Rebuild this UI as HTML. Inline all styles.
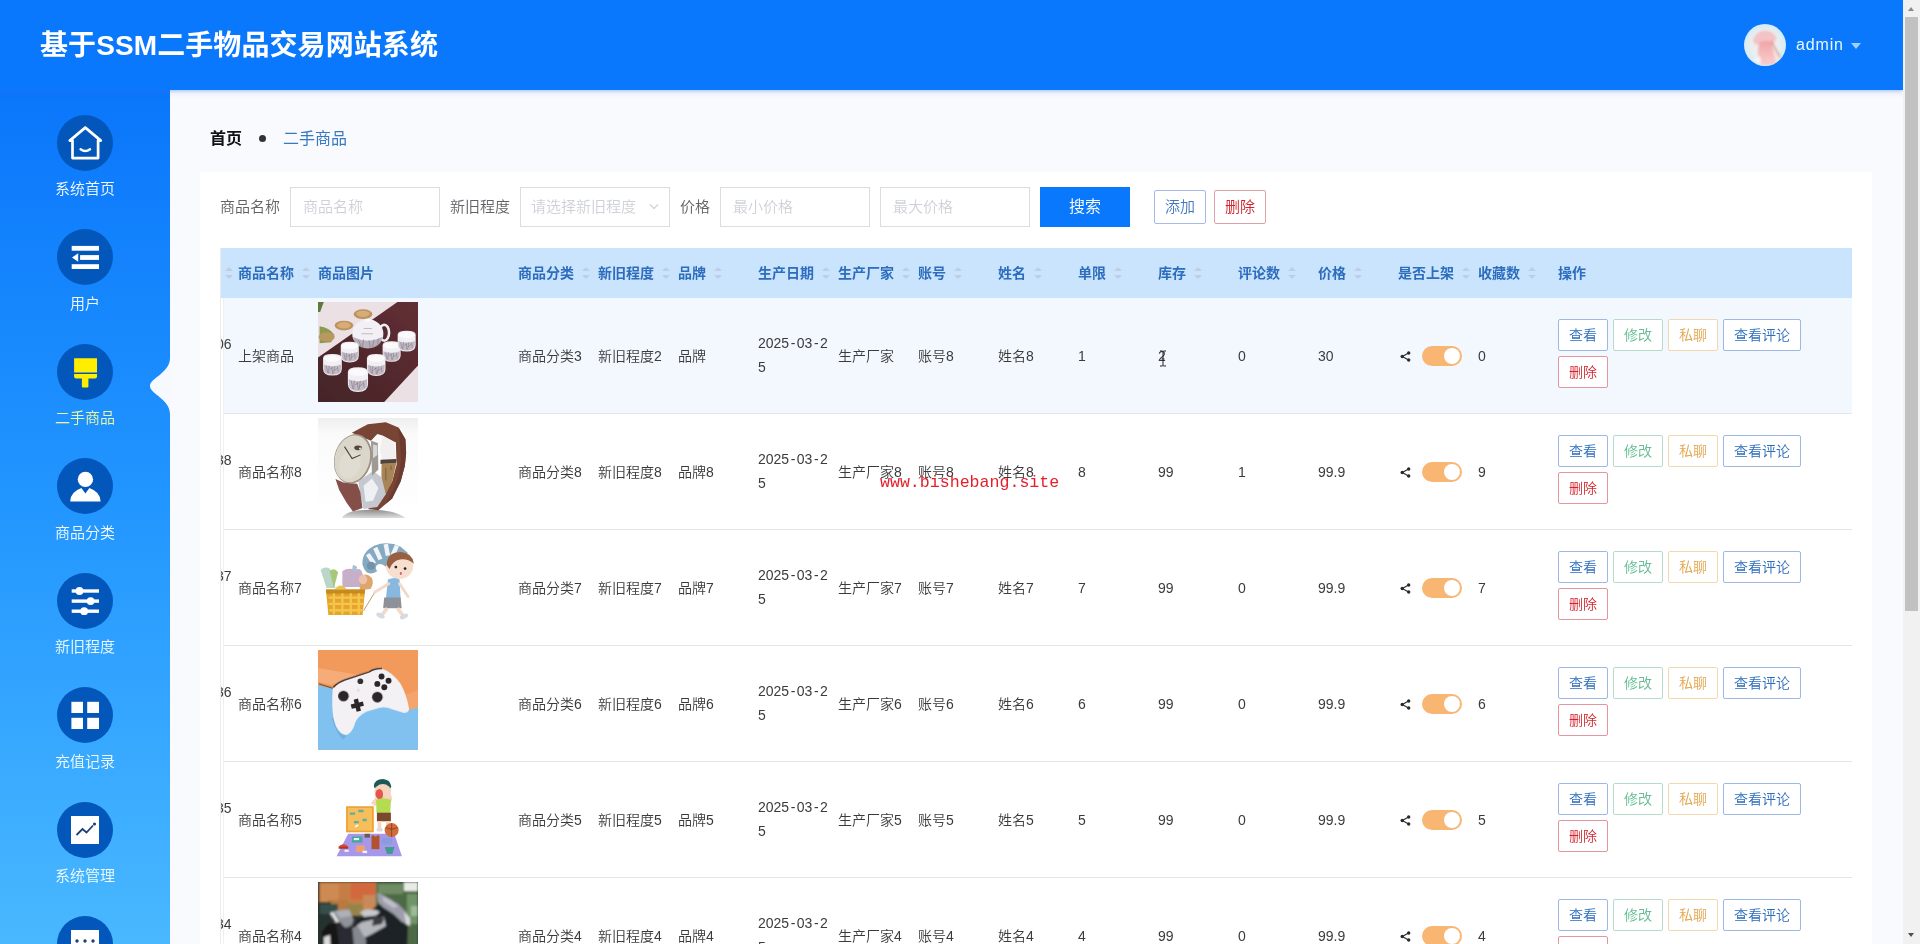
<!DOCTYPE html>
<html lang="zh-CN">
<head>
<meta charset="utf-8">
<title>基于SSM二手物品交易网站系统</title>
<style>
*{box-sizing:border-box;margin:0;padding:0}
html,body{width:1920px;height:944px;overflow:hidden}
body{font-family:"Liberation Sans","Noto Sans CJK SC",sans-serif;font-size:14px;font-weight:350;color:#333;background:#f8fafe;position:relative}
.header,.sidebar,.main,.wm,.sbar{will-change:transform}
/* ---------- header ---------- */
.header{position:absolute;left:0;top:0;width:1903px;height:90px;background:#0a78fd;z-index:5;box-shadow:0 1px 3px rgba(30,120,245,.32),0 3px 6px rgba(110,110,230,.13)}
.header .title{position:absolute;left:40px;top:0;height:90px;line-height:92px;font-size:28px;font-weight:700;color:#fff;white-space:nowrap;letter-spacing:.09px}
.header .user{position:absolute;left:1743px;top:24px;height:42px;display:flex;align-items:center;color:#fff;font-size:16px}
.header .avatar{width:42px;height:42px;border-radius:50%;overflow:hidden;display:block;margin-left:1px}
.header .uname{margin-left:10px;line-height:42px;letter-spacing:.85px;color:#e8f8ff}
.header .caret{margin-left:7px;margin-top:2px;width:0;height:0;border-left:5px solid transparent;border-right:5px solid transparent;border-top:6px solid #9fd0ff}
/* ---------- sidebar ---------- */
.sidebar{position:absolute;left:0;top:90px;width:170px;height:854px;background:linear-gradient(180deg,#0a76fb 0%,#2296ff 48.6%,#49b8ff 100%);z-index:3;overflow:hidden}
.menu{list-style:none}
.menu li{height:114.5px;text-align:center;color:#f2fbff;font-size:15px;position:relative}
.menu li .ic{position:absolute;left:57px;top:24.5px;width:56px;height:56px;border-radius:50%;background:#0457ba;display:block}
.menu li .ic svg{position:absolute;left:0;top:0;width:56px;height:56px}
.menu li .tx{position:absolute;left:0;width:170px;top:88px;line-height:22px;font-weight:350}
.menu li.on .tx{color:#eaf7a8}
.notch{position:absolute;left:148px;top:266px;width:22px;height:60px}
/* ---------- main ---------- */
.main{position:absolute;left:170px;top:90px;width:1733px;height:854px;background:#f8fafe;overflow:hidden}
.crumb{position:absolute;left:40px;top:37.500px;height:22px;line-height:22px;font-size:16px;white-space:nowrap}
.crumb b{font-weight:700;color:#111}
.crumb i{display:inline-block;width:7px;height:7px;border-radius:50%;background:#333;margin:0 17.5px 1px 16.5px;vertical-align:middle}
.crumb span{color:#3a78c2;font-weight:400}
.card{position:absolute;left:30px;top:82px;width:1672px;height:800px;background:#fff}
.filter{position:absolute;left:20px;top:15px;height:40px;width:1600px;font-size:15px;color:#606266}
.filter label{position:absolute;top:0;line-height:40px;white-space:nowrap}
.filter .inp{position:absolute;top:0;width:150px;height:40px;border:1px solid #dcdde0;background:#fff;color:#ced1d7;line-height:38px;padding-left:12px;font-size:15px;white-space:nowrap;overflow:hidden}
.filter .btn-s{position:absolute;left:820px;top:0;width:90px;height:40px;background:#0a78fd;color:#fff;font-size:16px;text-align:center;line-height:39px}
.filter .btn-p{position:absolute;top:3px;height:34px;width:52px;border:1px solid #a6bce4;border-radius:2px;background:#fff;text-align:center;line-height:32px;font-size:15px;color:#4478bf}
.filter .btn-p.del{border-color:#e0a0a6;color:#cf222c}
/* ---------- table ---------- */
.tbl{position:absolute;left:20px;top:76px;width:1632px;height:724px;overflow:hidden;border-left:1px solid #ebebee}
.thead{position:absolute;left:0;top:0;width:1631px;height:50px;background:#cae4fe}
.thead span{position:absolute;top:0;line-height:51px;font-weight:700;color:#2d6dbd;white-space:nowrap}
.thead em{position:absolute;top:19px;width:9px;height:13px}
.thead em:before,.thead em:after{content:"";position:absolute;left:0;border-left:4.500px solid transparent;border-right:4.500px solid transparent}
.thead em:before{top:0;border-bottom:4.5px solid #bdcde6}
.thead em:after{top:7.5px;border-top:4.5px solid #bdcde6}
.row{position:absolute;left:0;width:1631px;height:116px;background:#fff}
.row:before{content:"";position:absolute;left:2px;top:0;width:1px;height:116px;background:#f0f0f3}
.row:after{content:"";position:absolute;left:3px;right:0;bottom:0;height:1px;background:#e2e5ec}
.row.hv{background:linear-gradient(90deg,#fff 3px,#f3f7fe 3px)}
.row .c{position:absolute;white-space:nowrap;line-height:23px;color:#3b3b3b}
.row .idx{left:-5px}
.row .pic{position:absolute;left:97px;top:4px;width:100px;height:100px;display:block}
.row .date{white-space:normal;width:72px;line-height:24px;word-break:break-all}
.row .date i{font-style:normal;margin:0 1.5px}
.sw{position:absolute;left:1201px;top:48px;width:40px;height:20px;border-radius:10px;background:#f9b572}
.sw:after{content:"";position:absolute;right:2px;top:2px;width:16px;height:16px;border-radius:50%;background:#fff}
.share{position:absolute;left:1179px;top:53px;width:11px;height:11px}
.ops{position:absolute;left:1337px;top:21px;width:290px;font-size:0}
.ops a{display:inline-block;height:32px;line-height:30px;padding:0 10px;border:1px solid #9db8e4;border-radius:2px;background:#fff;color:#2d6dbd;font-size:14px;margin:0 5px 5px 0;text-decoration:none;vertical-align:top}
.ops a.g{color:#64bd93;border-color:#b5dccb}
.ops a.o{color:#e2a44c;border-color:#f3d8ae}
.ops a.r{color:#d3222c;border-color:#e5959b}
/* ---------- misc ---------- */
.wm{position:absolute;left:880px;top:471.700px;font-family:"Liberation Mono",monospace;font-size:16.6px;line-height:22px;color:#e5202b;z-index:9;white-space:nowrap}
.ibeam{position:absolute;left:1159px;top:350px;width:8px;height:17px;z-index:9}
.sbar{position:absolute;left:1903px;top:0;width:17px;height:944px;background:#f1f1f1;z-index:10}
.sbar .th{position:absolute;left:2px;top:17px;width:13px;height:594px;background:#c1c1c1}
.sbar .up,.sbar .dn{position:absolute;left:5px;width:0;height:0;border-left:3.5px solid transparent;border-right:3.5px solid transparent}
.sbar .up{top:7px;border-bottom:4px solid #8a8a8a}
.sbar .dn{top:933px;border-top:4px solid #505050}
</style>
</head>
<body>
<div class="header">
  <div class="title">基于SSM二手物品交易网站系统</div>
  <div class="user">
    <span class="avatar"><svg viewBox="0 0 42 42" width="42" height="42"><defs><radialGradient id="ga"><stop offset=".6" stop-color="#ecefed"/><stop offset="1" stop-color="#d5ecf8"/></radialGradient><filter id="ba"><feGaussianBlur stdDeviation=".9"/></filter><linearGradient id="gb" x1="0" y1="0" x2="0" y2="1"><stop offset="0" stop-color="#f2a3a8"/><stop offset="1" stop-color="#f7cfcd"/></linearGradient></defs><rect width="42" height="42" fill="url(#ga)"/><g filter="url(#ba)"><path d="M9 17q2-10 12-10.500 9 .5 11.500 8l-3 5-18 1z" fill="#f3c3c6"/><path d="M15 19q6-4 12-1l5 10 .5 13h-17l-1.500-12z" fill="url(#gb)"/><path d="M27.500 17.500l8.500 16" stroke="#c9856f" stroke-width="1.200"/><path d="M28 20l7 14-3 6-3-14z" fill="#f4e3df"/><path d="M8 36l8-4 1 8z" fill="#f5f5f7"/></g></svg></span>
    <span class="uname">admin</span><span class="caret"></span>
  </div>
</div>

<div class="sidebar">
  <ul class="menu">
    <li><span class="ic"><svg viewBox="0 0 56 56"><path d="M28.300 12.600L12.800 25.600h2.700v17.500h25.600V25.600h2.700z" fill="none" stroke="#fff" stroke-width="2.700" stroke-linejoin="round"/><path d="M23.600 34.200q4.700 3.600 9.400 0" fill="none" stroke="#fff" stroke-width="2.400" stroke-linecap="round"/></svg></span><span class="tx">系统首页</span></li>
    <li><span class="ic"><svg viewBox="0 0 56 56"><rect x="14.700" y="16.900" width="27.300" height="4.800" fill="#fff"/><rect x="23.100" y="26.100" width="18.900" height="4.800" fill="#fff"/><rect x="14.700" y="35.200" width="27.300" height="4.800" fill="#fff"/><path d="M15 28.500l6.200-4.200v8.400z" fill="#fff"/></svg></span><span class="tx">用户</span></li>
    <li class="on"><span class="ic"><svg viewBox="0 0 56 56"><path d="M17.100 14.200h22.900v14.200H17.100zM17.100 30h22.900v2.500q0 2-2 2h-6.600v8.100q0 1-1 1h-4.500q-1 0-1-1V34.500H19.100q-2 0-2-2z" fill="#ffee00"/></svg></span><span class="tx">二手商品</span></li>
    <li><span class="ic"><svg viewBox="0 0 56 56"><circle cx="28.400" cy="21.400" r="7.700" fill="#fff"/><path d="M13.200 43.500q0-9.500 11.200-13.500l4 5.500 4-5.500q11.200 4 11.200 13.500z" fill="#fff"/></svg></span><span class="tx">商品分类</span></li>
    <li><span class="ic"><svg viewBox="0 0 56 56"><g fill="#fff"><rect x="14.700" y="16.300" width="27.300" height="3.400"/><rect x="14.700" y="26.400" width="27.300" height="3.400"/><rect x="14.700" y="36.500" width="27.300" height="3.400"/><circle cx="22.500" cy="18" r="3.900"/><circle cx="33.600" cy="28.100" r="3.900"/><circle cx="27.200" cy="38.200" r="3.900"/></g></svg></span><span class="tx">新旧程度</span></li>
    <li><span class="ic"><svg viewBox="0 0 56 56"><g fill="#fff"><rect x="14.400" y="14.800" width="11.600" height="11.200"/><rect x="30.200" y="14.800" width="11.800" height="11.200"/><rect x="14.400" y="30.800" width="11.600" height="11.200"/><rect x="30.200" y="30.800" width="11.800" height="11.200"/></g></svg></span><span class="tx">充值记录</span></li>
    <li><span class="ic"><svg viewBox="0 0 56 56"><rect x="14" y="14" width="28" height="28" fill="#fff"/><path d="M19.500 33l6-6 4 3.500 6.500-7" fill="none" stroke="#1c3f78" stroke-width="1.800"/><circle cx="37.500" cy="22" r="1.600" fill="#1c3f78"/></svg></span><span class="tx">系统管理</span></li>
    <li><span class="ic"><svg viewBox="0 0 56 56"><rect x="14" y="14" width="28" height="28" fill="#fff"/><circle cx="20" cy="25" r="1.700" fill="#1c3f78"/><circle cx="28" cy="25" r="1.700" fill="#1c3f78"/><circle cx="36" cy="25" r="1.700" fill="#1c3f78"/></svg></span><span class="tx">更多</span></li>
  </ul>
  <svg class="notch" viewBox="0 0 22 60"><path d="M22 2C22 17 2 22 2 30C2 38 22 43 22 58V60H23V0z" fill="#f6faff"/></svg>
</div>

<div class="main">
  <div class="crumb"><b>首页</b><i></i><span>二手商品</span></div>
  <div class="card">
    <div class="filter">
      <label style="left:0">商品名称</label><div class="inp" style="left:70px">商品名称</div>
      <label style="left:230px">新旧程度</label><div class="inp" style="left:300px;padding-left:10px">请选择新旧程度<svg style="position:absolute;right:10px;top:15px" width="10" height="8" viewBox="0 0 10 8"><path d="M1 1.500l4 4 4-4" fill="none" stroke="#d0d3d9" stroke-width="1.300"/></svg></div>
      <label style="left:460px">价格</label><div class="inp" style="left:500px">最小价格</div>
      <div class="inp" style="left:660px">最大价格</div>
      <div class="btn-s">搜索</div>
      <div class="btn-p" style="left:934px">添加</div>
      <div class="btn-p del" style="left:994px">删除</div>
    </div>
    <div class="tbl">
      <div class="thead">
        <em style="left:4px"></em>
        <span style="left:17px">商品名称</span>
        <em style="left:81px"></em>
        <span style="left:97px">商品图片</span>
        <span style="left:297px">商品分类</span>
        <em style="left:361px"></em>
        <span style="left:377px">新旧程度</span>
        <em style="left:441px"></em>
        <span style="left:457px">品牌</span>
        <em style="left:493px"></em>
        <span style="left:537px">生产日期</span>
        <em style="left:601px"></em>
        <span style="left:617px">生产厂家</span>
        <em style="left:681px"></em>
        <span style="left:697px">账号</span>
        <em style="left:733px"></em>
        <span style="left:777px">姓名</span>
        <em style="left:813px"></em>
        <span style="left:857px">单限</span>
        <em style="left:893px"></em>
        <span style="left:937px">库存</span>
        <em style="left:973px"></em>
        <span style="left:1017px">评论数</span>
        <em style="left:1067px"></em>
        <span style="left:1097px">价格</span>
        <em style="left:1133px"></em>
        <span style="left:1177px">是否上架</span>
        <em style="left:1241px"></em>
        <span style="left:1257px">收藏数</span>
        <em style="left:1307px"></em>
        <span style="left:1337px">操作</span>
      </div>
      <div class="row hv" style="top:50px">
        <span class="c idx" style="top:34.500px">06</span>
        <span class="c" style="left:17px;top:46.5px">上架商品</span>
        <svg class="pic" viewBox="0 0 944 944"><defs><clipPath id="c1"><rect width="944" height="944"/></clipPath><filter id="b1" x="-5%" y="-5%" width="110%" height="110%"><feGaussianBlur stdDeviation="5"/></filter><linearGradient id="g1" x1="0" y1="1" x2="1" y2="0"><stop offset="0" stop-color="#44242a"/><stop offset=".55" stop-color="#54292d"/><stop offset="1" stop-color="#632f35"/></linearGradient></defs><g clip-path="url(#c1)"><rect width="944" height="944" fill="#ebe1e4"/><g filter="url(#b1)"><path d="M0 0h55L20 95H0z" fill="#5f7a3a"/><path d="M15 230q90 10 140 80l-30 70-110 10z" fill="#8c9a4e"/><path d="M750 0h194v600L625 944H0V525z" fill="url(#g1)"/><ellipse cx="425" cy="115" rx="88" ry="46" fill="#bf9260"/><ellipse cx="425" cy="112" rx="62" ry="30" fill="#d6ad78"/><ellipse cx="245" cy="222" rx="88" ry="46" fill="#bf9260"/><ellipse cx="245" cy="219" rx="62" ry="30" fill="#d6ad78"/><ellipse cx="82" cy="330" rx="76" ry="44" fill="#b9975e"/><ellipse cx="625" cy="290" rx="46" ry="76" fill="none" stroke="#f0eef2" stroke-width="24"/><ellipse cx="470" cy="300" rx="147" ry="137" fill="#f2f0f4"/><path d="M332 330q138 70 276 0-10 108-138 108t-138-108z" fill="#8f8496" opacity=".6"/><path d="M380 360l30 60M430 350l-10 80M480 360l14 70M530 350l-16 76M570 345l-6 50M410 300h110M430 250h80" stroke="#4a3a52" stroke-width="7" opacity=".4" fill="none"/><ellipse cx="470" cy="172" rx="26" ry="14" fill="#fbfafc"/><g transform="translate(215 375)"><path d="M0 38q0-38 85-38t85 38v95q0 62-85 62t-85-62z" fill="#f1eff3"/><ellipse cx="85" cy="40" rx="76" ry="30" fill="#faf9fb"/><path d="M8 95q77 30 154 0v40q0 52-77 52t-77-52z" fill="#9a8f9f" opacity=".55"/><path d="M30 110l12 60M55 105l-6 70M80 120l8 60M105 108l-10 66M130 112l8 50M60 140l30-20M100 150l28-22" stroke="#4a3a46" stroke-width="6" opacity=".45" fill="none"/></g><g transform="translate(610 370)"><path d="M0 38q0-38 85-38t85 38v95q0 62-85 62t-85-62z" fill="#f1eff3"/><ellipse cx="85" cy="40" rx="76" ry="30" fill="#faf9fb"/><path d="M8 95q77 30 154 0v40q0 52-77 52t-77-52z" fill="#9a8f9f" opacity=".55"/><path d="M30 110l12 60M55 105l-6 70M80 120l8 60M105 108l-10 66M130 112l8 50M60 140l30-20M100 150l28-22" stroke="#4a3a46" stroke-width="6" opacity=".45" fill="none"/></g><g transform="translate(752 272)"><path d="M0 38q0-38 85-38t85 38v95q0 62-85 62t-85-62z" fill="#f1eff3"/><ellipse cx="85" cy="40" rx="76" ry="30" fill="#faf9fb"/><path d="M8 95q77 30 154 0v40q0 52-77 52t-77-52z" fill="#9a8f9f" opacity=".55"/><path d="M30 110l12 60M55 105l-6 70M80 120l8 60M105 108l-10 66M130 112l8 50M60 140l30-20M100 150l28-22" stroke="#4a3a46" stroke-width="6" opacity=".45" fill="none"/></g><g transform="translate(48 492) scale(1.04 1.04)"><path d="M0 38q0-38 85-38t85 38v95q0 62-85 62t-85-62z" fill="#f1eff3"/><ellipse cx="85" cy="40" rx="76" ry="30" fill="#faf9fb"/><path d="M8 95q77 30 154 0v40q0 52-77 52t-77-52z" fill="#9a8f9f" opacity=".55"/><path d="M30 110l12 60M55 105l-6 70M80 120l8 60M105 108l-10 66M130 112l8 50M60 140l30-20M100 150l28-22" stroke="#4a3a46" stroke-width="6" opacity=".45" fill="none"/></g><g transform="translate(462 492) scale(1.03 1.06)"><path d="M0 38q0-38 85-38t85 38v95q0 62-85 62t-85-62z" fill="#f1eff3"/><ellipse cx="85" cy="40" rx="76" ry="30" fill="#faf9fb"/><path d="M8 95q77 30 154 0v40q0 52-77 52t-77-52z" fill="#9a8f9f" opacity=".55"/><path d="M30 110l12 60M55 105l-6 70M80 120l8 60M105 108l-10 66M130 112l8 50M60 140l30-20M100 150l28-22" stroke="#4a3a46" stroke-width="6" opacity=".45" fill="none"/></g><g transform="translate(282 615) scale(1.12 1.2)"><path d="M0 38q0-38 85-38t85 38v95q0 62-85 62t-85-62z" fill="#f1eff3"/><ellipse cx="85" cy="40" rx="76" ry="30" fill="#faf9fb"/><path d="M8 95q77 30 154 0v40q0 52-77 52t-77-52z" fill="#9a8f9f" opacity=".55"/><path d="M30 110l12 60M55 105l-6 70M80 120l8 60M105 108l-10 66M130 112l8 50M60 140l30-20M100 150l28-22" stroke="#4a3a46" stroke-width="6" opacity=".45" fill="none"/></g></g></g></svg>
        <span class="c" style="left:297px;top:46.5px">商品分类3</span>
        <span class="c" style="left:377px;top:46.5px">新旧程度2</span>
        <span class="c" style="left:457px;top:46.5px">品牌</span>
        <span class="c date" style="left:537px;top:33px">2025<i>-</i>03<i>-</i>2<br>5</span>
        <span class="c" style="left:617px;top:46.5px">生产厂家</span>
        <span class="c" style="left:697px;top:46.5px">账号8</span>
        <span class="c" style="left:777px;top:46.5px">姓名8</span>
        <span class="c" style="left:857px;top:46.5px">1</span>
        <span class="c" style="left:937px;top:46.5px">2</span>
        <span class="c" style="left:1017px;top:46.5px">0</span>
        <span class="c" style="left:1097px;top:46.5px">30</span>
        <svg class="share" viewBox="0 0 11 11"><path d="M8.500 2L2.300 5.500 8.500 9" fill="none" stroke="#2a2a2a" stroke-width="1.100"/><circle cx="8.700" cy="2" r="1.700" fill="#2a2a2a"/><circle cx="2.200" cy="5.500" r="1.700" fill="#2a2a2a"/><circle cx="8.700" cy="9" r="1.700" fill="#2a2a2a"/></svg><span class="sw"></span>
        <span class="c" style="left:1257px;top:46.5px">0</span>
        <div class="ops"><a>查看</a><a class="g">修改</a><a class="o">私聊</a><a>查看评论</a><a class="r">删除</a></div>
      </div>
      <div class="row" style="top:166px">
        <span class="c idx" style="top:34.500px">38</span>
        <span class="c" style="left:17px;top:46.5px">商品名称8</span>
        <svg class="pic" viewBox="0 0 944 944"><defs><clipPath id="c2"><rect width="944" height="944"/></clipPath><filter id="b2" x="-5%" y="-5%" width="110%" height="110%"><feGaussianBlur stdDeviation="5"/></filter><linearGradient id="g2" x1="0" y1="0" x2="0" y2="1"><stop offset="0" stop-color="#eeeeee"/><stop offset=".16" stop-color="#fafafa"/><stop offset="1" stop-color="#ffffff"/></linearGradient><radialGradient id="g2b" cx=".5" cy="0" r="1"><stop offset="0" stop-color="#8c8c8c"/><stop offset="1" stop-color="#dadada"/></radialGradient></defs><g clip-path="url(#c2)"><rect width="944" height="944" fill="url(#g2)"/><g filter="url(#b2)"><path d="M225 944q40-78 270-78t330 78z" fill="url(#g2b)"/><path d="M320 140L470 60l170-20 120 50 65 110 7 130-12 120-40 150-80 160-130 110-100-10 90-70 80-90 60-100 45-170-5-40-5-160-15-5-110-60-50-15-60 65z" fill="#784435"/><path d="M760 90l65 110 7 130-12 120-40 150-80 160-60 50 60-110 60-150 25-150-10-160z" fill="#6a3b2f"/><path d="M610 170l110 60 15 170-125 5-25-105z" fill="#f1efef"/><path d="M590 395l150-8v42l-150 6z" fill="#4f4238"/><path d="M600 432l140-10-40 178-60 120-42-80z" fill="#a98457"/><path d="M640 470v120M690 450v40" stroke="#5f4a30" stroke-width="10" opacity=".6"/><path d="M380 600l140-100 80 60 40 160-80 120-130 20-30-140z" fill="#c5c9cf"/><path d="M430 640l80-70 60 90-50 120-70 10z" fill="#eef0f3"/><path d="M165 575l75 35 130 10 30 80 20 150-90 32-60-82-70-120z" fill="#85504a"/><path d="M500 215l65 20 5 250-60 60z" fill="#a09a94"/><path d="M520 250l40 10v90l-40 30z" fill="#d8d8da"/><ellipse cx="330" cy="385" rx="176" ry="236" transform="rotate(14 330 385)" fill="#9a8f82"/><ellipse cx="324" cy="385" rx="165" ry="225" transform="rotate(14 324 385)" fill="#dad6ca"/><ellipse cx="300" cy="440" rx="100" ry="130" transform="rotate(14 300 440)" fill="#e0dcd2"/><path d="M250 270l72 112 80-34" fill="none" stroke="#4b4038" stroke-width="10"/><ellipse cx="378" cy="282" rx="36" ry="22" fill="#54453a"/><ellipse cx="398" cy="288" rx="12" ry="9" fill="#e9e5da"/></g></g></svg>
        <span class="c" style="left:297px;top:46.5px">商品分类8</span>
        <span class="c" style="left:377px;top:46.5px">新旧程度8</span>
        <span class="c" style="left:457px;top:46.5px">品牌8</span>
        <span class="c date" style="left:537px;top:33px">2025<i>-</i>03<i>-</i>2<br>5</span>
        <span class="c" style="left:617px;top:46.5px">生产厂家8</span>
        <span class="c" style="left:697px;top:46.5px">账号8</span>
        <span class="c" style="left:777px;top:46.5px">姓名8</span>
        <span class="c" style="left:857px;top:46.5px">8</span>
        <span class="c" style="left:937px;top:46.5px">99</span>
        <span class="c" style="left:1017px;top:46.5px">1</span>
        <span class="c" style="left:1097px;top:46.5px">99.9</span>
        <svg class="share" viewBox="0 0 11 11"><path d="M8.500 2L2.300 5.500 8.500 9" fill="none" stroke="#2a2a2a" stroke-width="1.100"/><circle cx="8.700" cy="2" r="1.700" fill="#2a2a2a"/><circle cx="2.200" cy="5.500" r="1.700" fill="#2a2a2a"/><circle cx="8.700" cy="9" r="1.700" fill="#2a2a2a"/></svg><span class="sw"></span>
        <span class="c" style="left:1257px;top:46.5px">9</span>
        <div class="ops"><a>查看</a><a class="g">修改</a><a class="o">私聊</a><a>查看评论</a><a class="r">删除</a></div>
      </div>
      <div class="row" style="top:282px">
        <span class="c idx" style="top:34.500px">37</span>
        <span class="c" style="left:17px;top:46.5px">商品名称7</span>
        <svg class="pic" viewBox="0 0 944 944"><defs><filter id="b3" x="-5%" y="-5%" width="110%" height="110%"><feGaussianBlur stdDeviation="4.500"/></filter></defs><rect width="944" height="944" fill="#fff"/><g filter="url(#b3)"><path d="M420 290q-10-120 110-180 130-50 250 10l70 60-210 130q-40-40-80-20-30 30 0 60-50 40-100 10-30-30-40-70z" fill="#86a9c2"/><path d="M470 190l60 90M540 130l50 110M640 95l20 110M745 110l-40 90" stroke="#eef4f8" stroke-width="42"/><circle cx="500" cy="300" r="38" fill="#6f93ab"/><ellipse cx="770" cy="305" rx="128" ry="120" fill="#f7dfd0"/><path d="M645 290q10-120 140-120 110 10 120 110-60-50-130-40-70 10-100 90z" fill="#98603f"/><circle cx="735" cy="312" r="13" fill="#2a2020"/><circle cx="822" cy="326" r="13" fill="#2a2020"/><ellipse cx="782" cy="372" rx="10" ry="14" fill="#c9666a"/><path d="M660 430q60-30 110 0l10 190H640z" fill="#86b8e0"/><path d="M625 600h155l10 100H615z" fill="#8f919a"/><path d="M655 700l-60 75M750 700l60 80" stroke="#f3d9c8" stroke-width="34"/><ellipse cx="590" cy="770" rx="42" ry="22" fill="#d5dbe2" transform="rotate(25 590 770)"/><ellipse cx="812" cy="778" rx="42" ry="22" fill="#d5dbe2" transform="rotate(-25 812 778)"/><path d="M668 470L535 550M770 470l80 120" stroke="#f3d9c8" stroke-width="28" stroke-linecap="round"/><path d="M530 560L430 725" stroke="#b99a6a" stroke-width="9"/><path d="M25 340q40-40 90-10l50 180H80z" fill="#b9d6c8"/><path d="M110 350q40-40 80 10l-40 150z" fill="#a6c878"/><path d="M230 350q60-40 120-10 50-30 70 30l10 130H230z" fill="#c7aec9"/><path d="M330 290l40 20-10 40h-40z" fill="#a9bfd6"/><path d="M395 400q60-40 110 10 30 50-10 110l-100 10z" fill="#dca66c"/><ellipse cx="425" cy="430" rx="40" ry="45" fill="#efc2b0"/><path d="M160 520q50-70 110 0z" fill="#e6c547"/><path d="M75 525h370l-24 240H98z" fill="#e6a42c"/><path d="M75 525h370l-4 40H79z" fill="#c78a1e"/><path d="M100 600h330M100 660h326M105 720h318M150 560v200M230 560v200M310 560v200M385 560v200" stroke="#f6cb55" stroke-width="22" opacity=".85"/></g></svg>
        <span class="c" style="left:297px;top:46.5px">商品分类7</span>
        <span class="c" style="left:377px;top:46.5px">新旧程度7</span>
        <span class="c" style="left:457px;top:46.5px">品牌7</span>
        <span class="c date" style="left:537px;top:33px">2025<i>-</i>03<i>-</i>2<br>5</span>
        <span class="c" style="left:617px;top:46.5px">生产厂家7</span>
        <span class="c" style="left:697px;top:46.5px">账号7</span>
        <span class="c" style="left:777px;top:46.5px">姓名7</span>
        <span class="c" style="left:857px;top:46.5px">7</span>
        <span class="c" style="left:937px;top:46.5px">99</span>
        <span class="c" style="left:1017px;top:46.5px">0</span>
        <span class="c" style="left:1097px;top:46.5px">99.9</span>
        <svg class="share" viewBox="0 0 11 11"><path d="M8.500 2L2.300 5.500 8.500 9" fill="none" stroke="#2a2a2a" stroke-width="1.100"/><circle cx="8.700" cy="2" r="1.700" fill="#2a2a2a"/><circle cx="2.200" cy="5.500" r="1.700" fill="#2a2a2a"/><circle cx="8.700" cy="9" r="1.700" fill="#2a2a2a"/></svg><span class="sw"></span>
        <span class="c" style="left:1257px;top:46.5px">7</span>
        <div class="ops"><a>查看</a><a class="g">修改</a><a class="o">私聊</a><a>查看评论</a><a class="r">删除</a></div>
      </div>
      <div class="row" style="top:398px">
        <span class="c idx" style="top:34.500px">36</span>
        <span class="c" style="left:17px;top:46.5px">商品名称6</span>
        <svg class="pic" viewBox="0 0 944 944"><defs><clipPath id="c4"><rect width="944" height="944"/></clipPath><filter id="b4" x="-5%" y="-5%" width="110%" height="110%"><feGaussianBlur stdDeviation="5"/></filter></defs><g clip-path="url(#c4)"><rect width="944" height="944" fill="#f29a5b"/><g filter="url(#b4)"><path d="M0 170l420 70-300 90L0 300z" fill="#f6b080" opacity=".8"/><path d="M0 330l140 35 710 205 94-35v409H0z" fill="#80c1ef"/><path d="M820 420l124-40v160l-90 30z" fill="#f4a670" opacity=".8"/><path d="M150 640q40 130 100 190" stroke="#5f9fd0" stroke-width="40" fill="none" opacity=".5"/><path d="M140 360q40-50 110-75l230-75q30-35 120-35 100 30 180 145 60 110 80 240-10 40-60 30l-100-30q-60-30-120-15l-120 35q-100 45-120 140-20 60-70 80-60 5-100-80-50-110-30-360z" fill="#f3f1f4"/><path d="M145 352q40-45 108-70l232-76q35-32 120-33" fill="none" stroke="#2a2024" stroke-width="12"/><path d="M10 320l130 40" stroke="#3a2a28" stroke-width="8"/></g><circle cx="240" cy="435" r="50" fill="#2b2728"/><circle cx="560" cy="445" r="50" fill="#2b2728"/><path d="M350 462h42v38h38v42h-38v38h-42v-38h-38v-42h38z" fill="#2b2728" transform="rotate(-14 371 521)"/><circle cx="400" cy="295" r="27" fill="#34302f"/><circle cx="600" cy="250" r="28" fill="#2b2728"/><circle cx="666" cy="290" r="28" fill="#2b2728"/><circle cx="560" cy="320" r="28" fill="#2b2728"/><circle cx="626" cy="352" r="28" fill="#2b2728"/><circle cx="380" cy="380" r="16" fill="#e4e2e6"/></g></svg>
        <span class="c" style="left:297px;top:46.5px">商品分类6</span>
        <span class="c" style="left:377px;top:46.5px">新旧程度6</span>
        <span class="c" style="left:457px;top:46.5px">品牌6</span>
        <span class="c date" style="left:537px;top:33px">2025<i>-</i>03<i>-</i>2<br>5</span>
        <span class="c" style="left:617px;top:46.5px">生产厂家6</span>
        <span class="c" style="left:697px;top:46.5px">账号6</span>
        <span class="c" style="left:777px;top:46.5px">姓名6</span>
        <span class="c" style="left:857px;top:46.5px">6</span>
        <span class="c" style="left:937px;top:46.5px">99</span>
        <span class="c" style="left:1017px;top:46.5px">0</span>
        <span class="c" style="left:1097px;top:46.5px">99.9</span>
        <svg class="share" viewBox="0 0 11 11"><path d="M8.500 2L2.300 5.500 8.500 9" fill="none" stroke="#2a2a2a" stroke-width="1.100"/><circle cx="8.700" cy="2" r="1.700" fill="#2a2a2a"/><circle cx="2.200" cy="5.500" r="1.700" fill="#2a2a2a"/><circle cx="8.700" cy="9" r="1.700" fill="#2a2a2a"/></svg><span class="sw"></span>
        <span class="c" style="left:1257px;top:46.5px">6</span>
        <div class="ops"><a>查看</a><a class="g">修改</a><a class="o">私聊</a><a>查看评论</a><a class="r">删除</a></div>
      </div>
      <div class="row" style="top:514px">
        <span class="c idx" style="top:34.500px">35</span>
        <span class="c" style="left:17px;top:46.5px">商品名称5</span>
        <svg class="pic" viewBox="0 0 944 944"><defs><filter id="b5" x="-5%" y="-5%" width="110%" height="110%"><feGaussianBlur stdDeviation="4.500"/></filter></defs><rect width="944" height="944" fill="#fff"/><g filter="url(#b5)"><path d="M285 640h435l72 212H175z" fill="#a797ea"/><rect x="265" y="380" width="262" height="246" fill="#eea233"/><rect x="282" y="396" width="228" height="214" fill="#f6bf5c"/><path d="M300 450h50M380 425h50M340 530h44M420 510h40" stroke="#62ad9f" stroke-width="22"/><path d="M350 575l30-20" stroke="#fff" stroke-width="14"/><path d="M527 185q10-60 85-62 70 5 80 70l-10 20q-70-40-150-5z" fill="#1f5a55"/><ellipse cx="612" cy="240" rx="78" ry="70" fill="#f6d4bd"/><ellipse cx="578" cy="268" rx="36" ry="52" fill="#e4574d"/><path d="M640 230q50 10 60 80l-20 60-50-30z" fill="#f6d4bd"/><path d="M500 350l50-60 30 40-40 50z" fill="#f6d4bd"/><path d="M548 320q70-30 140 0l-6 122H552z" fill="#b5dc4f"/><path d="M556 440h132v82H556z" fill="#7a4a2a"/><path d="M580 520v80M660 520v60" stroke="#f6d4bd" stroke-width="34"/><ellipse cx="582" cy="602" rx="30" ry="18" fill="#d9dde2"/><circle cx="695" cy="605" r="66" fill="#cf6c38"/><path d="M640 580q55 30 110 0M695 540v130" stroke="#7a3a20" stroke-width="7" fill="none"/><path d="M190 765q50-55 100 0z" fill="#d93f2e"/><rect x="195" y="765" width="90" height="16" fill="#b5301f"/><rect x="320" y="665" width="100" height="58" fill="#49a69f"/><rect x="338" y="680" width="50" height="20" fill="#e9f3f2"/><rect x="360" y="750" width="82" height="62" fill="#f0a070"/><path d="M505 665h75v120h-75z" fill="#b2532d"/><circle cx="520" cy="668" r="14" fill="#b2532d"/><circle cx="566" cy="668" r="14" fill="#b2532d"/><rect x="600" y="680" width="100" height="60" fill="#8a9be0"/><path d="M630 765h92l-20 66h-52z" fill="#3f9c8c"/><rect x="440" y="640" width="50" height="36" fill="#6a5a4a"/><rect x="420" y="800" width="44" height="22" fill="#f3f1f8"/><rect x="250" y="790" width="40" height="20" fill="#f3f1f8"/></g></svg>
        <span class="c" style="left:297px;top:46.5px">商品分类5</span>
        <span class="c" style="left:377px;top:46.5px">新旧程度5</span>
        <span class="c" style="left:457px;top:46.5px">品牌5</span>
        <span class="c date" style="left:537px;top:33px">2025<i>-</i>03<i>-</i>2<br>5</span>
        <span class="c" style="left:617px;top:46.5px">生产厂家5</span>
        <span class="c" style="left:697px;top:46.5px">账号5</span>
        <span class="c" style="left:777px;top:46.5px">姓名5</span>
        <span class="c" style="left:857px;top:46.5px">5</span>
        <span class="c" style="left:937px;top:46.5px">99</span>
        <span class="c" style="left:1017px;top:46.5px">0</span>
        <span class="c" style="left:1097px;top:46.5px">99.9</span>
        <svg class="share" viewBox="0 0 11 11"><path d="M8.500 2L2.300 5.500 8.500 9" fill="none" stroke="#2a2a2a" stroke-width="1.100"/><circle cx="8.700" cy="2" r="1.700" fill="#2a2a2a"/><circle cx="2.200" cy="5.500" r="1.700" fill="#2a2a2a"/><circle cx="8.700" cy="9" r="1.700" fill="#2a2a2a"/></svg><span class="sw"></span>
        <span class="c" style="left:1257px;top:46.5px">5</span>
        <div class="ops"><a>查看</a><a class="g">修改</a><a class="o">私聊</a><a>查看评论</a><a class="r">删除</a></div>
      </div>
      <div class="row" style="top:630px">
        <span class="c idx" style="top:34.500px">34</span>
        <span class="c" style="left:17px;top:46.5px">商品名称4</span>
        <svg class="pic" viewBox="0 0 100 100"><defs><clipPath id="c6"><rect width="100" height="100"/></clipPath><filter id="b6" x="-5%" y="-5%" width="110%" height="110%"><feGaussianBlur stdDeviation="1"/></filter></defs><g clip-path="url(#c6)"><rect width="100" height="100" fill="#2a2f2c"/><g filter="url(#b6)"><rect x="1" y="0" width="58" height="31" fill="#c67c44"/><rect x="3" y="2" width="18" height="18" fill="#cd8b53"/><rect x="33" y="1" width="24" height="16" fill="#d2673e"/><rect x="10" y="18" width="20" height="12" fill="#b87a40"/><rect x="28" y="22" width="18" height="12" fill="#96834a"/><rect x="45" y="13" width="13" height="15" fill="#c88a58"/><rect x="58" y="0" width="42" height="64" fill="#4d6b46"/><rect x="60" y="2" width="25" height="10" fill="#6f8c62"/><rect x="86" y="0" width="14" height="9" fill="#e8ece4"/><rect x="89" y="12" width="11" height="30" fill="#6f9468"/><rect x="93" y="24" width="7" height="10" fill="#9dbb98"/><rect x="0" y="20" width="13" height="80" fill="#27322d"/><rect x="2" y="22" width="18" height="10" fill="#35504a"/><path d="M60 22l10 6 14 12 6 4-2 56H30l4-56 8-8 10-6z" fill="#1f2025"/><path d="M59 11l4 1 7 4 10 6 8 8 4 8-1 4-7-2-8-8-10-6-6-6z" fill="#9d9dab"/><path d="M64 14l8 4 8 6-4 2-10-6z" fill="#c0c0cc"/><path d="M86 30l6 6v8l-4-2z" fill="#d8dadd"/><path d="M42 30l6-2.500 10 .5 4 2-4 3.500-12 1.500z" fill="#c6c9ce"/><path d="M12 31l5-2 14-1.500 5 10.500-2 5-6 3-10-6z" fill="#8f9299"/><path d="M17 29l14-1.500 3 6.500-12 2z" fill="#adb0b7"/><path d="M12 31l3-1 7 12-3 1z" fill="#e6e7ea"/><path d="M38 44l6-4 22-5 2 9-14 8-8 4z" fill="#b4b7bd"/><path d="M34 46l6-2 8 14-2 42H38z" fill="#85888e"/><path d="M4 50l6-8 12-2 6 8 2 52H4z" fill="#141519"/><path d="M6 55l6-2 2 47H6z" fill="#d9dadc"/><path d="M18 40l10 6 6-2 6 56H26z" fill="#2a2b30"/><path d="M56 34l10 2-2 6-10 2z" fill="#3a3b42"/></g></g></svg>
        <span class="c" style="left:297px;top:46.5px">商品分类4</span>
        <span class="c" style="left:377px;top:46.5px">新旧程度4</span>
        <span class="c" style="left:457px;top:46.5px">品牌4</span>
        <span class="c date" style="left:537px;top:33px">2025<i>-</i>03<i>-</i>2<br>5</span>
        <span class="c" style="left:617px;top:46.5px">生产厂家4</span>
        <span class="c" style="left:697px;top:46.5px">账号4</span>
        <span class="c" style="left:777px;top:46.5px">姓名4</span>
        <span class="c" style="left:857px;top:46.5px">4</span>
        <span class="c" style="left:937px;top:46.5px">99</span>
        <span class="c" style="left:1017px;top:46.5px">0</span>
        <span class="c" style="left:1097px;top:46.5px">99.9</span>
        <svg class="share" viewBox="0 0 11 11"><path d="M8.500 2L2.300 5.500 8.500 9" fill="none" stroke="#2a2a2a" stroke-width="1.100"/><circle cx="8.700" cy="2" r="1.700" fill="#2a2a2a"/><circle cx="2.200" cy="5.500" r="1.700" fill="#2a2a2a"/><circle cx="8.700" cy="9" r="1.700" fill="#2a2a2a"/></svg><span class="sw"></span>
        <span class="c" style="left:1257px;top:46.5px">4</span>
        <div class="ops"><a>查看</a><a class="g">修改</a><a class="o">私聊</a><a>查看评论</a><a class="r">删除</a></div>
      </div>
    </div>
  </div>
</div>

<div class="wm">www.bishebang.site</div>
<svg class="ibeam" viewBox="0 0 8 17"><path d="M1 1h2.500l.5.600.5-.600H7M4 1.500v14M1 16h2.500l.5-.600.5.600H7M2.500 9h3" fill="none" stroke="#222" stroke-width="1"/></svg>
<div class="sbar"><span class="up"></span><div class="th"></div><span class="dn"></span></div>
</body>
</html>
